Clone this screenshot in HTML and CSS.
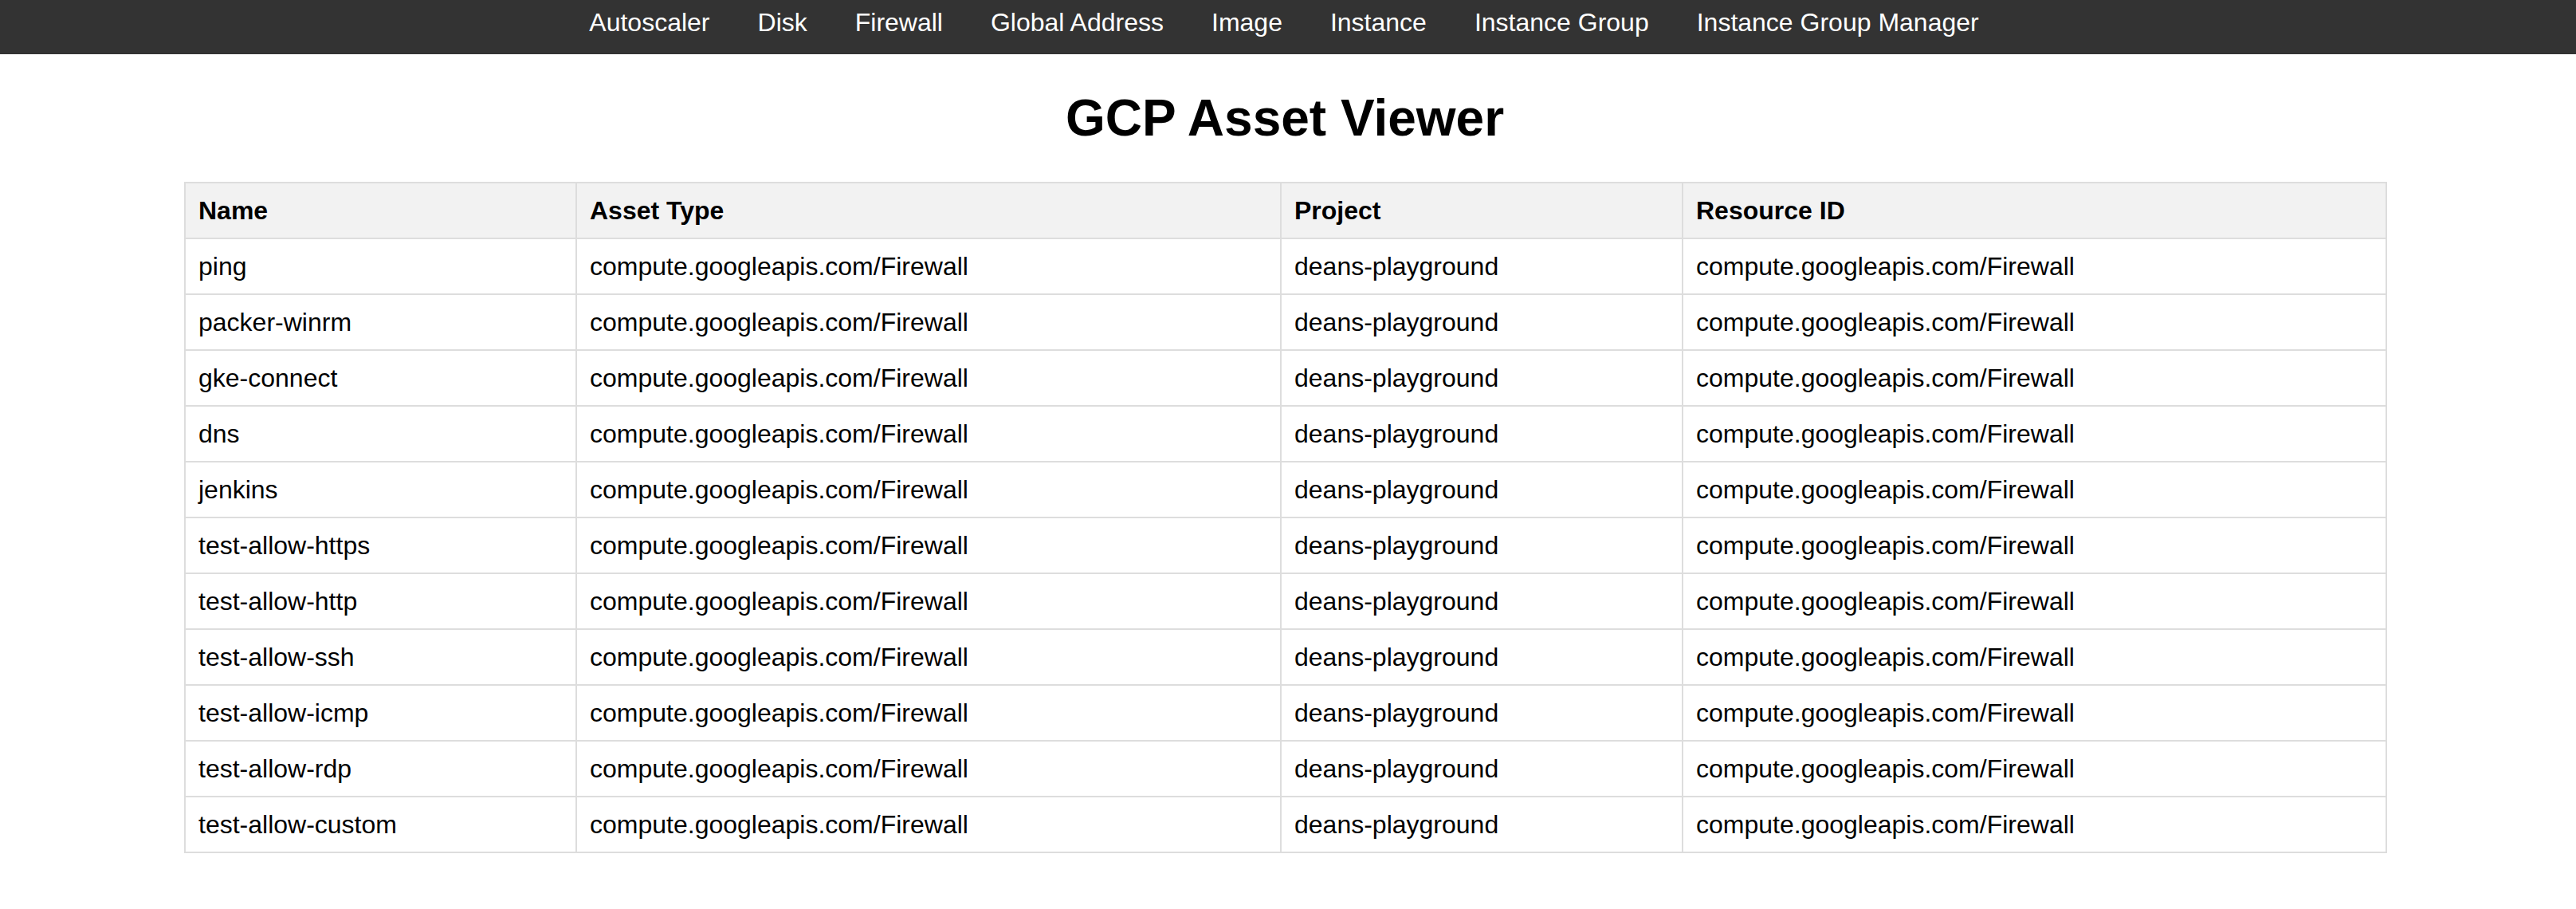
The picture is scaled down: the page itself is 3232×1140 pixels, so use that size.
FILE: index.html
```html
<!DOCTYPE html>
<html lang="en">
<head>
<meta charset="utf-8">
<title>GCP Asset Viewer</title>
<link rel="stylesheet" href="styles.css">
</head>
<body>
<nav class="topnav">
  <a class="nav-link" href="#">Autoscaler</a>
  <a class="nav-link" href="#">Disk</a>
  <a class="nav-link" href="#">Firewall</a>
  <a class="nav-link" href="#">Global Address</a>
  <a class="nav-link" href="#">Image</a>
  <a class="nav-link" href="#">Instance</a>
  <a class="nav-link" href="#">Instance Group</a>
  <a class="nav-link" href="#">Instance Group Manager</a>
</nav>
<main class="content">
  <h1 class="title">GCP Asset Viewer</h1>
  <table class="assets">
    <colgroup>
      <col class="col-name">
      <col class="col-type">
      <col class="col-project">
      <col class="col-id">
    </colgroup>
    <thead>
      <tr><th>Name</th><th>Asset Type</th><th>Project</th><th>Resource ID</th></tr>
    </thead>
    <tbody>
      <tr><td>ping</td><td>compute.googleapis.com/Firewall</td><td>deans-playground</td><td>compute.googleapis.com/Firewall</td></tr>
      <tr><td>packer-winrm</td><td>compute.googleapis.com/Firewall</td><td>deans-playground</td><td>compute.googleapis.com/Firewall</td></tr>
      <tr><td>gke-connect</td><td>compute.googleapis.com/Firewall</td><td>deans-playground</td><td>compute.googleapis.com/Firewall</td></tr>
      <tr><td>dns</td><td>compute.googleapis.com/Firewall</td><td>deans-playground</td><td>compute.googleapis.com/Firewall</td></tr>
      <tr><td>jenkins</td><td>compute.googleapis.com/Firewall</td><td>deans-playground</td><td>compute.googleapis.com/Firewall</td></tr>
      <tr><td>test-allow-https</td><td>compute.googleapis.com/Firewall</td><td>deans-playground</td><td>compute.googleapis.com/Firewall</td></tr>
      <tr><td>test-allow-http</td><td>compute.googleapis.com/Firewall</td><td>deans-playground</td><td>compute.googleapis.com/Firewall</td></tr>
      <tr><td>test-allow-ssh</td><td>compute.googleapis.com/Firewall</td><td>deans-playground</td><td>compute.googleapis.com/Firewall</td></tr>
      <tr><td>test-allow-icmp</td><td>compute.googleapis.com/Firewall</td><td>deans-playground</td><td>compute.googleapis.com/Firewall</td></tr>
      <tr><td>test-allow-rdp</td><td>compute.googleapis.com/Firewall</td><td>deans-playground</td><td>compute.googleapis.com/Firewall</td></tr>
      <tr><td>test-allow-custom</td><td>compute.googleapis.com/Firewall</td><td>deans-playground</td><td>compute.googleapis.com/Firewall</td></tr>
    </tbody>
  </table>
</main>
</body>
</html>
```
FILE: styles.css
```css
html, body {
  margin: 0;
  padding: 0;
  background: #ffffff;
}

body {
  font-family: "Liberation Sans", Arial, Helvetica, sans-serif;
  font-size: 32px;
  color: #000000;
}

.topnav {
  display: flex;
  justify-content: center;
  background: #333333;
  height: 68px;
  box-sizing: border-box;
  padding: 10px 10px 0 0;
}

.nav-link {
  color: #ffffff;
  text-decoration: none;
  padding: 0 30px;
  line-height: 37px;
  font-size: 32px;
}

.content {
  padding: 0 239px 0 231px;
}

.title {
  font-size: 64px;
  font-weight: bold;
  text-align: center;
  margin: 43px 0;
  line-height: 74px;
}

.assets {
  width: 100%;
  border-collapse: collapse;
  table-layout: fixed;
}

.col-name { width: 491px; }
.col-type { width: 884px; }
.col-project { width: 504px; }
.col-id { width: 883px; }

.assets th,
.assets td {
  border: 2px solid #dddddd;
  padding: 16px 16px;
  line-height: 36px;
  text-align: left;
  font-size: 32px;
}

.assets th {
  background: #f2f2f2;
  font-weight: bold;
}
```
